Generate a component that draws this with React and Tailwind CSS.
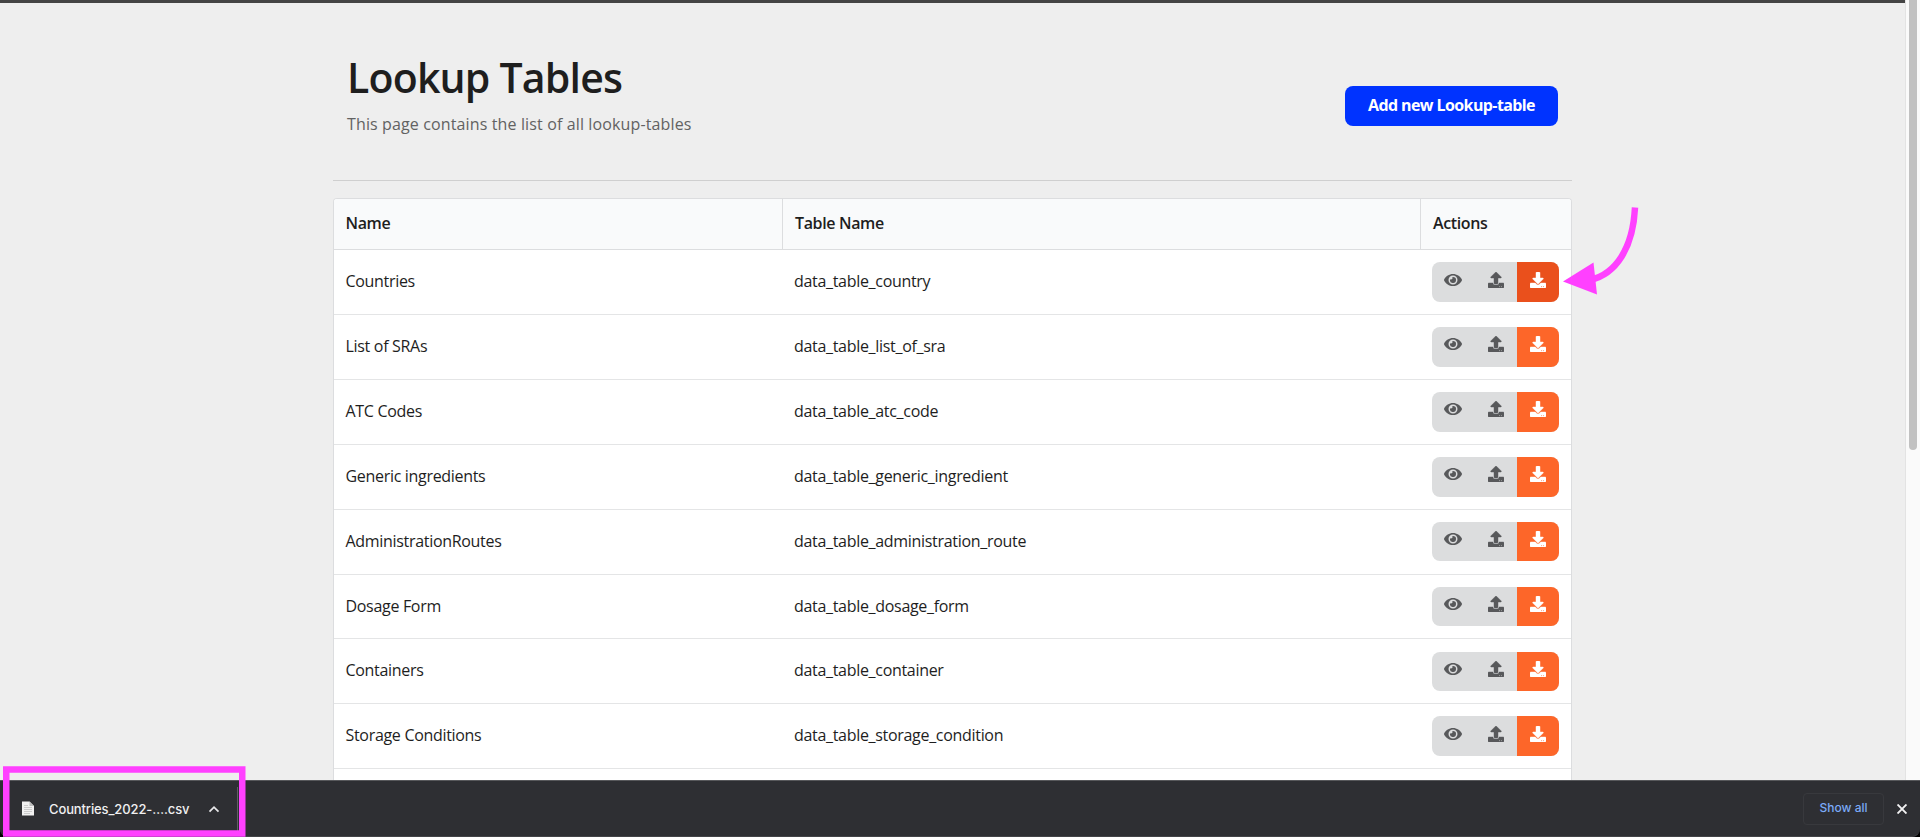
import { FaEye, FaUpload, FaDownload } from "react-icons/fa";

const rows = [
  ["Countries", "data_table_country"],
  ["List of SRAs", "data_table_list_of_sra"],
  ["ATC Codes", "data_table_atc_code"],
  ["Generic ingredients", "data_table_generic_ingredient"],
  ["AdministrationRoutes", "data_table_administration_route"],
  ["Dosage Form", "data_table_dosage_form"],
  ["Containers", "data_table_container"],
  ["Storage Conditions", "data_table_storage_condition"],
];

const buttonHeights = ["h-10", "h-10", "h-10", "h-10", "h-[39px]", "h-[39px]", "h-[39px]", "h-10"];

function Actions({ index }) {
  const active = index === 0;
  const pad = active || index === 7 ? "pt-[10px]" : "pt-[9px]";
  return (
    <div className={`flex w-[127px] overflow-hidden rounded-lg bg-[#dcddde] text-[#58595b] ${buttonHeights[index]}`}>
      <button aria-label="View" className={`flex w-[42px] justify-center ${pad}`}>
        <FaEye className="h-4 w-[18px]" />
      </button>
      <button aria-label="Upload" className={`flex w-[43px] pl-[14px] ${pad}`}>
        <FaUpload className="size-4" strokeWidth={14} />
      </button>
      <button
        aria-label="Download"
        className={`flex w-[42px] justify-center text-white ${pad} ${active ? "bg-[#ea501c]" : "bg-[#fd6629]"}`}
      >
        <FaDownload className="size-4" strokeWidth={14} />
      </button>
    </div>
  );
}

function LookupTable() {
  return (
    <div className="mt-[17px] flex-1 overflow-hidden rounded-t-[4px] border border-b-0 border-[#dcdddf] bg-white">
      <div className="flex h-[51px] border-b border-[#dcdddf] bg-[#f9fafb] text-[16px] font-semibold leading-[22px] tracking-[-0.360px]">
        <div className="flex w-[449px] items-center border-r border-[#dcdddf] pb-[2px] pl-[11.500px]">Name</div>
        <div className="flex w-[638px] items-center border-r border-[#dcdddf] pb-[2px] pl-3">Table Name</div>
        <div className="flex flex-1 items-center pb-[2px] pl-3">Actions</div>
      </div>
      {rows.map(([name, table], i) => (
        <div
          key={table}
          className={`flex items-start border-b border-[#e4e5e6] text-[16px] leading-[22px] tracking-[-0.310px] ${i === 5 ? "h-16" : "h-[65px]"}`}
        >
          <div className="w-[448px] pl-[11.500px] pt-5">{name}</div>
          <div className="w-[638px] pl-3 pt-5">{table}</div>
          <div className={i === 6 ? "pl-3 pt-[13px]" : "pl-3 pt-3"}>
            <Actions index={i} />
          </div>
        </div>
      ))}
    </div>
  );
}

function DownloadShelf() {
  return (
    <footer className="flex h-[57px] items-center rounded-b-lg border-y border-b-[#434448] border-t-[#57585b] bg-[#2e2f33]">
      <div className="flex h-full w-[237px] items-center pl-[21px]">
        <svg className="mb-px" width="14" height="15" viewBox="0 0 14 15">
          <path d="M1 .5h7.5L13 5v9.5H1z" fill="#f1f1f1" />
          <path d="M8.5.5V5H13z" fill="#bcbcbc" />
          <path d="M3 4.5h4M3 6.5h8M3 8.5h8M3 10.5h8M3 12.5h6" stroke="#c3c3c3" strokeWidth=".8" />
        </svg>
        <span className="ml-[14px] w-[142px] whitespace-nowrap pt-[3px] font-[Inter,sans-serif] text-[13px] font-medium tracking-[-0.120px] text-[#f0f0f1]">
          Countries_2022-….csv
        </span>
        <svg className="ml-[17px]" width="12" height="8" viewBox="0 0 12 8" fill="none">
          <path d="M1.5 6.7 6 2.2l4.500 4.500" stroke="#e8e8ea" strokeWidth="1.700" />
        </svg>
      </div>
      <div className="h-11 w-px bg-[#5f6065]" />
      <div className="ml-auto mr-[13px] flex items-center">
        <button className="flex h-8 w-[81px] items-center justify-center rounded border border-[#38393d] pb-px font-[Inter,sans-serif] text-xs font-medium text-[#7baaf7]">
          Show all
        </button>
        <svg className="ml-[13px]" width="10" height="10" viewBox="0 0 10 10">
          <path d="m.5.5 9 9M9.500.5.5 9.500" stroke="#f2f2f3" strokeWidth="1.900" />
        </svg>
      </div>
    </footer>
  );
}

export default function App() {
  return (
    <div className="relative flex h-[837px] w-[1920px] flex-col overflow-hidden bg-black font-['Open_Sans',sans-serif] text-[#1e1e1e]">
      <div className="flex h-[780px]">
        <main className="flex flex-1 flex-col border-t-[3px] border-[#444] bg-[#eeeeee]">
          <div className="ml-[333px] flex h-full w-[1239px] flex-col">
            <header className="flex h-[178px] justify-between border-b border-[#cfcfcf] pl-[14px] pr-[14px]">
              <div className="pt-[46px]">
                <h1 className="whitespace-nowrap text-[41px] font-semibold leading-[56px] tracking-[-0.800px]">Lookup Tables</h1>
                <p className="mt-[7px] whitespace-nowrap text-[16px] leading-6 tracking-[0.130px] text-[#626262]">
                  This page contains the list of all lookup-tables
                </p>
              </div>
              <button className="mt-[83px] h-10 w-[213px] rounded-lg bg-[#0033ff] pb-[2px] text-[16px] font-bold tracking-[-0.600px] text-white">
                Add new Lookup-table
              </button>
            </header>
            <LookupTable />
          </div>
        </main>
        <div className="w-[15px] border-l border-[#e3e3e3] bg-[#fafafa] pl-[3px]">
          <div className="h-[450px] w-2 rounded-b-full bg-[#c1c1c1]" />
        </div>
      </div>
      <DownloadShelf />
      <svg className="absolute left-0 top-[760px]" width="250" height="77" viewBox="0 760 250 77">
        <rect x="6.250" y="769.500" width="236" height="64" fill="none" stroke="#ff40ff" strokeWidth="6.500" />
      </svg>
      <svg className="absolute left-[1560px] top-[204px]" width="84" height="94" viewBox="1560 204 84 94">
        <path d="M1635 207.500C1633 248 1616 274 1590 280" fill="none" stroke="#ff40ff" strokeWidth="6.500" />
        <path d="M1563 281.500 1593.500 262.500 1597 294.500z" fill="#ff40ff" />
      </svg>
    </div>
  );
}
